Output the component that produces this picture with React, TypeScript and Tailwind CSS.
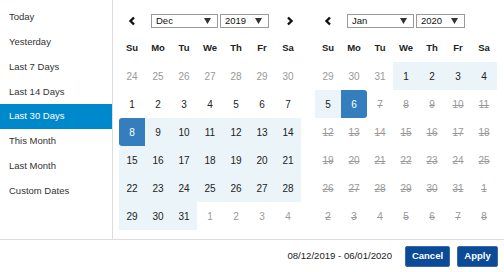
import React from 'react';

type Day = { n: number; kind: 'off' | 'norm' | 'range' | 'start' | 'end' | 'dis' | 'offdis' };

const ranges = ['Today', 'Yesterday', 'Last 7 Days', 'Last 14 Days', 'Last 30 Days', 'This Month', 'Last Month', 'Custom Dates'];
const heads = ['Su', 'Mo', 'Tu', 'We', 'Th', 'Fr', 'Sa'];

const dec: Day[] = [
  ...[24, 25, 26, 27, 28, 29, 30].map(n => ({ n, kind: 'off' as const })),
  ...[1, 2, 3, 4, 5, 6, 7].map(n => ({ n, kind: 'norm' as const })),
  { n: 8, kind: 'start' },
  ...Array.from({ length: 23 }, (_, i) => ({ n: i + 9, kind: 'range' as const })),
  ...[1, 2, 3, 4].map(n => ({ n, kind: 'off' as const })),
];

const jan: Day[] = [
  ...[29, 30, 31].map(n => ({ n, kind: 'off' as const })),
  ...[1, 2, 3, 4, 5].map(n => ({ n, kind: 'range' as const })),
  { n: 6, kind: 'end' },
  ...Array.from({ length: 25 }, (_, i) => ({ n: i + 7, kind: 'dis' as const })),
  ...[1, 2, 3, 4, 5, 6, 7, 8].map(n => ({ n, kind: 'offdis' as const })),
];

const cellCls: Record<Day['kind'], string> = {
  off: 'text-[#999]',
  norm: 'text-[#222]',
  range: 'bg-[#ebf4f8] text-[#222]',
  start: 'bg-[#357ebd] text-white rounded-l-[3px]',
  end: 'bg-[#357ebd] text-white rounded-r-[3px]',
  dis: 'text-[#999] line-through',
  offdis: 'text-[#999] line-through',
};

const Chevron = ({ dir }: { dir: 'l' | 'r' }) => (
  <svg width="8" height="10" viewBox="0 0 8 10">
    <polyline
      points={dir === 'l' ? '6,1.5 2.5,5 6,8.5' : '2,1.5 5.5,5 2,8.5'}
      fill="none"
      stroke="#111"
      strokeWidth="2.4"
    />
  </svg>
);

const Select = ({ label, w }: { label: string; w: string }) => (
  <div className={`${w} h-[14px] border border-[#9a9a9a] flex items-center justify-between pl-[4px] pr-[6px] text-[9.5px] text-[#111] leading-none`}>
    <span>{label}</span>
    <svg width="7" height="6" viewBox="0 0 7 6">
      <polygon points="0,0 7,0 3.5,6" fill="#333" />
    </svg>
  </div>
);

const Calendar = ({ month, year, days, next }: { month: string; year: string; days: Day[]; next?: boolean }) => (
  <div className="w-[182px] pt-[7px] flex flex-col">
    <div className="h-[27px] flex items-center">
      <div className="w-[26px] flex justify-center"><Chevron dir="l" /></div>
      <div className="ml-[6px] flex gap-[2px]">
        <Select label={month} w="w-[67px]" />
        <Select label={year} w="w-[49px]" />
      </div>
      {next && <div className="ml-auto w-[22px] flex justify-center"><Chevron dir="r" /></div>}
    </div>
    <div className="grid grid-cols-7">
      {heads.map(h => (
        <div key={h} className="h-[28px] flex items-center justify-center text-[9.5px] font-bold text-[#222]">{h}</div>
      ))}
      {days.map((d, i) => (
        <div key={i} className={`h-[28px] flex items-center justify-center text-[10px] ${cellCls[d.kind]}`}>{d.n}</div>
      ))}
    </div>
  </div>
);

export default function App() {
  return (
    <div className="w-[504px] h-[272px] bg-white flex flex-col font-['Liberation_Sans',Arial,sans-serif]">
      <div className="h-[240px] flex border-b border-[#ddd]">
        <div className="w-[113px] border-r border-[#ddd] pt-[5px]">
          {ranges.map(r => (
            <div
              key={r}
              className={`h-[24.75px] flex items-center pl-[9px] text-[9.5px] ${r === 'Last 30 Days' ? 'bg-[#08c] text-white' : 'text-[#333]'}`}
            >
              {r}
            </div>
          ))}
        </div>
        <div className="flex pl-[6px] gap-[14px]">
          <Calendar month="Dec" year="2019" days={dec} next />
          <Calendar month="Jan" year="2020" days={jan} />
        </div>
      </div>
      <div className="h-[32px] flex items-center justify-end pr-[6px]">
        <span className="text-[9.6px] text-[#222] mr-[13px]">08/12/2019 - 06/01/2020</span>
        <button className="w-[45px] h-[21px] rounded-[2px] bg-[#0b4a97] border border-[#3a6aa6] text-white text-[9.5px] font-bold">Cancel</button>
        <button className="ml-[7px] w-[41px] h-[21px] rounded-[2px] bg-[#0b4a97] border border-[#3a6aa6] text-white text-[9.5px] font-bold">Apply</button>
      </div>
    </div>
  );
}
